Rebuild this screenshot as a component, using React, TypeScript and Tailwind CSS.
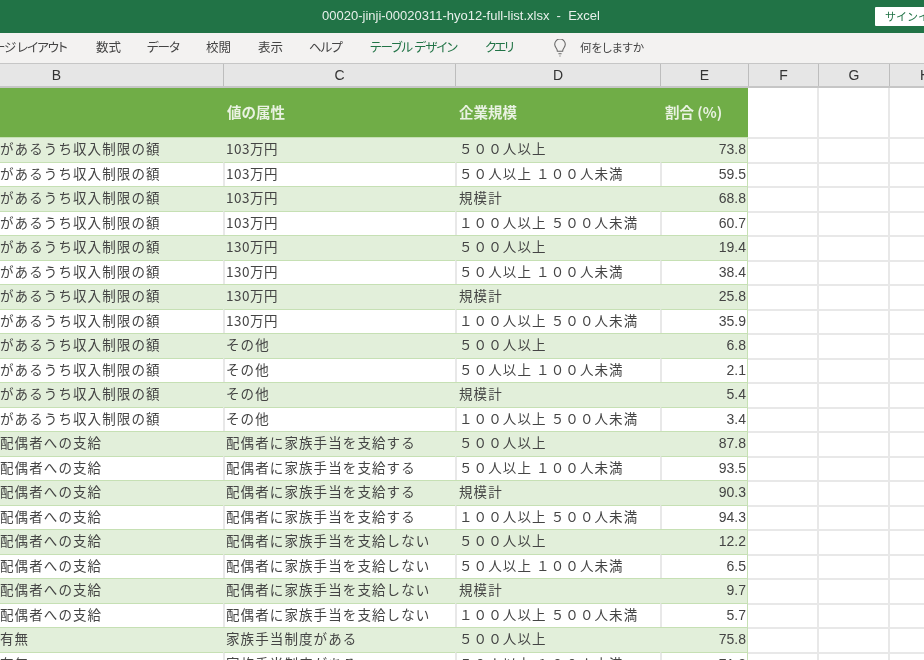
const jp = "font-['Noto_Sans_CJK_JP','Noto_Sans',sans-serif]";

const tabs = [
  { label: 'ージ レイアウト', cls: 'w-[103px] -ml-[7px] tracking-[-1px] text-[#444]' },
  { label: '数式', cls: 'w-[51px] text-[#444]' },
  { label: 'データ', cls: 'w-[59px] tracking-[-1px] text-[#444]' },
  { label: '校閲', cls: 'w-[52px] text-[#444]' },
  { label: '表示', cls: 'w-[51px] text-[#444]' },
  { label: 'ヘルプ', cls: 'w-[61px] tracking-[-1px] text-[#444]' },
  { label: 'テーブル デザイン', cls: 'w-[115px] tracking-[-0.8px] text-[#217346]' },
  { label: 'クエリ', cls: 'w-[68px] tracking-[-2px] text-[#217346]' },
];

const big = '５００人以上';
const mid = '５０人以上 １００人未満';
const sum = '規模計';
const large = '１００人以上 ５００人未満';
const inc = 'があるうち収入制限の額';
const spouse = '配偶者への支給';
const yes = '配偶者に家族手当を支給する';
const no = '配偶者に家族手当を支給しない';

const rows = [
  [inc, '103万円', big, '73.8'],
  [inc, '103万円', mid, '59.5'],
  [inc, '103万円', sum, '68.8'],
  [inc, '103万円', large, '60.7'],
  [inc, '130万円', big, '19.4'],
  [inc, '130万円', mid, '38.4'],
  [inc, '130万円', sum, '25.8'],
  [inc, '130万円', large, '35.9'],
  [inc, 'その他', big, '6.8'],
  [inc, 'その他', mid, '2.1'],
  [inc, 'その他', sum, '5.4'],
  [inc, 'その他', large, '3.4'],
  [spouse, yes, big, '87.8'],
  [spouse, yes, mid, '93.5'],
  [spouse, yes, sum, '90.3'],
  [spouse, yes, large, '94.3'],
  [spouse, no, big, '12.2'],
  [spouse, no, mid, '6.5'],
  [spouse, no, sum, '9.7'],
  [spouse, no, large, '5.7'],
  ['有無', '家族手当制度がある', big, '75.8'],
  ['有無', '家族手当制度がある', mid, '71.8'],
];

const headColumns = 'grid grid-cols-[224px_232px_205px_88px_70px_71px_71px]';
const columns = 'grid grid-cols-[223px_232px_205px_88px_71px_71px_71px]';

export default function App() {
  return (
    <div className={`${jp} h-[660px] w-[924px] overflow-hidden bg-white text-[13.5px] tracking-[1.1px] text-[#444] blur-[0.35px]`}>
      {/* title bar */}
      <div className="relative flex h-[33px] items-center justify-center bg-[#217346] pb-[2px] pr-[2px] text-[13px] tracking-normal text-[#e8f0eb] font-['Liberation_Sans',sans-serif]">
        <span className="whitespace-pre">00020-jinji-00020311-hyo12-full-list.xlsx  -  Excel</span>
        <div className={`${jp} absolute right-0 top-[7px] h-[19px] w-[49px] overflow-hidden whitespace-nowrap rounded-l-[1px] bg-white pl-[10px] text-[11px] leading-[19px] text-[#217346]`}>サインイン</div>
      </div>

      {/* ribbon tabs */}
      <div className="flex h-[30px] items-center whitespace-nowrap bg-[#f3f2f1] pb-[1px] text-[12.500px] tracking-normal [font-feature-settings:'palt']">
        {tabs.map((t) => (
          <div key={t.label} className={t.cls}>{t.label}</div>
        ))}
        <svg width="14" height="18" viewBox="1.500 0.500 11 17" fill="none" stroke="#666" strokeWidth="1">
          <path d="M4.500 12c0-2.500-2.500-3.500-2.500-6.500a5 5 0 0 1 10 0c0 3-2.500 4-2.500 6.500z" />
          <path d="M5.500 14.500h3M6.500 16.500h1" />
        </svg>
        <span className="ml-[13px] text-[11.500px]">何をしますか</span>
      </div>

      {/* column letters */}
      <div className={`${headColumns} h-[25px] border-b-[2px] border-t border-[#c6c6c6] bg-[#e6e6e6] text-[14px] tracking-normal font-['Liberation_Sans',sans-serif] text-[#333]`}>
        {['B', 'C', 'D', 'E', 'F', 'G', 'H'].map((c) => (
          <div key={c} className={`flex items-center justify-center border-r-[1.5px] border-[#bdbdbd] ${c === 'B' ? 'pr-[110px]' : ''}`}>{c}</div>
        ))}
      </div>

      {/* table header */}
      <div className={`${columns} h-[49px] text-[14.5px] font-bold tracking-normal text-[#e9f2e2]`}>
        <div className="bg-[#70ad47]" />
        <div className="flex items-center bg-[#70ad47] pb-[2px] pl-[4px]">値の属性</div>
        <div className="flex items-center bg-[#70ad47] pb-[2px] pl-[4px]">企業規模</div>
        <div className="flex items-center bg-[#70ad47] pb-[2px] pl-[5px] whitespace-nowrap">割合 (%)</div>
        <div className="border-r-[2px] border-[#e8e8e8]" />
        <div className="border-r-[2px] border-[#e8e8e8]" />
        <div />
      </div>

      {/* data rows */}
      {rows.map((r, i) => {
        const band = i % 2 === 0;
        const bg = band ? 'bg-[#e2efda]' : 'bg-white';
        const sep = band ? '' : 'border-l-[2px] border-l-[#e8e8e8]';
        const digits = r[1].startsWith('1') ? 'tracking-[0.5px]' : '';
        return (
          <div key={i} className={`${columns} h-[24.5px] leading-[20px] whitespace-nowrap`}>
            <div className={`${bg} border-t-[1.5px] border-[#c6e0b4]`}>{r[0]}</div>
            <div className={`${bg} border-t-[1.5px] border-[#c6e0b4] ${digits} ${band ? 'pl-[3px]' : `${sep} pl-[1px]`}`}>{r[1]}</div>
            <div className={`${bg} border-t-[1.5px] border-[#c6e0b4] ${band ? 'pl-[4px]' : `${sep} pl-[2px]`}`}>{r[2]}</div>
            <div className={`${bg} border-t-[1.5px] border-r-[1.5px] border-t-[#c6e0b4] border-r-[#c6e0b4] pr-[1px] text-right text-[14px] leading-[22px] tracking-normal font-['Liberation_Sans',sans-serif] ${sep}`}>{r[3]}</div>
            <div className="border-t-[2px] border-r-[2px] border-[#e8e8e8]" />
            <div className="border-t-[2px] border-r-[2px] border-[#e8e8e8]" />
            <div className="border-t-[2px] border-[#e8e8e8]" />
          </div>
        );
      })}
    </div>
  );
}
